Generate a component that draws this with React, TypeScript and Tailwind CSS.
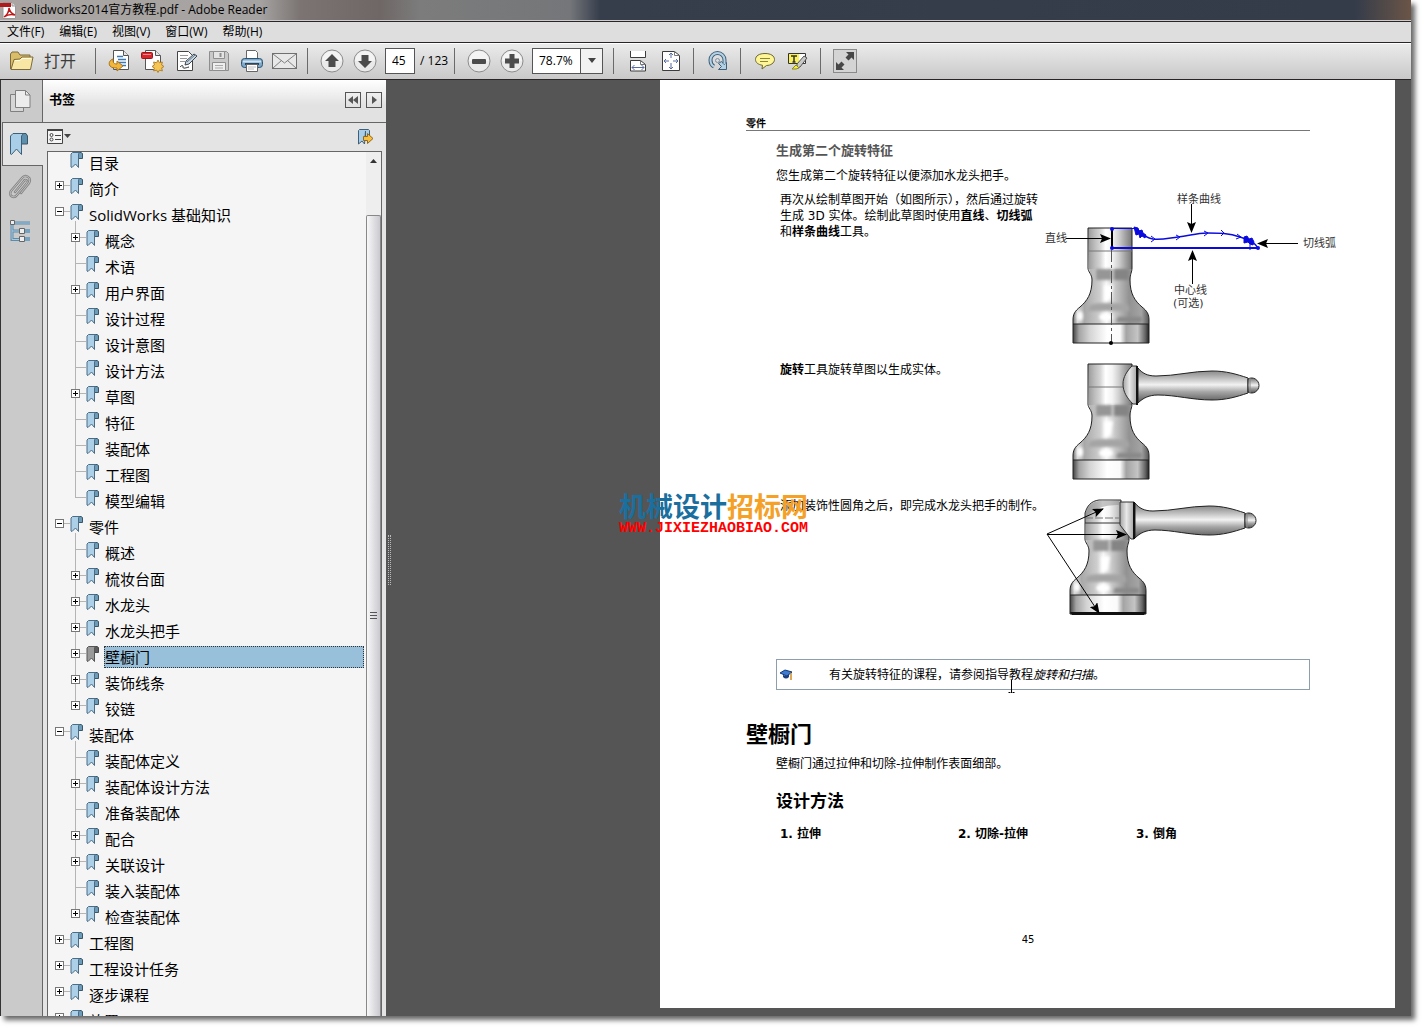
import React from 'react';

type Bookmark = {
  label: string;
  level: 1 | 2;
  state?: 'open' | 'closed';
  selected?: boolean;
  last?: boolean;
};

const bookmarks: Bookmark[] = [
  { label: '目录', level: 1 },
  { label: '简介', level: 1, state: 'closed' },
  { label: 'SolidWorks 基础知识', level: 1, state: 'open' },
  { label: '概念', level: 2, state: 'closed' },
  { label: '术语', level: 2 },
  { label: '用户界面', level: 2, state: 'closed' },
  { label: '设计过程', level: 2 },
  { label: '设计意图', level: 2 },
  { label: '设计方法', level: 2 },
  { label: '草图', level: 2, state: 'closed' },
  { label: '特征', level: 2 },
  { label: '装配体', level: 2 },
  { label: '工程图', level: 2 },
  { label: '模型编辑', level: 2, last: true },
  { label: '零件', level: 1, state: 'open' },
  { label: '概述', level: 2 },
  { label: '梳妆台面', level: 2, state: 'closed' },
  { label: '水龙头', level: 2, state: 'closed' },
  { label: '水龙头把手', level: 2, state: 'closed' },
  { label: '壁橱门', level: 2, state: 'closed', selected: true },
  { label: '装饰线条', level: 2, state: 'closed' },
  { label: '铰链', level: 2, state: 'closed', last: true },
  { label: '装配体', level: 1, state: 'open' },
  { label: '装配体定义', level: 2 },
  { label: '装配体设计方法', level: 2, state: 'closed' },
  { label: '准备装配体', level: 2 },
  { label: '配合', level: 2, state: 'closed' },
  { label: '关联设计', level: 2, state: 'closed' },
  { label: '装入装配体', level: 2 },
  { label: '检查装配体', level: 2, state: 'closed', last: true },
  { label: '工程图', level: 1, state: 'closed' },
  { label: '工程设计任务', level: 1, state: 'closed' },
  { label: '逐步课程', level: 1, state: 'closed' },
  { label: '放置', level: 1, state: 'closed' },
];

const menus = ['文件(F)', '编辑(E)', '视图(V)', '窗口(W)', '帮助(H)'];

/* ---------- icons ---------- */

const PdfIcon = () => (
  <svg width="16" height="17" viewBox="0 0 16 17">
    <path d="M3 .5h9l3.500 3.500v12.500H3z" fill="#fff" stroke="#999" />
    <path d="M12 .5v3.500h3.500" fill="#ddd" stroke="#999" />
    <path d="M0 1h11v4H0z" fill="#b01a1a" />
    <path d="M4 15c3-2 5-6 5-9 1 4 3 6 6 7-4-1-8 0-11 2z" fill="none" stroke="#c01818" strokeWidth="1.500" />
  </svg>
);

const FolderIcon = () => (
  <svg width="25" height="20" viewBox="0 0 25 20">
    <path d="M1.500 18V3l1.500-2h6l2 3h10v4" fill="#d9bd68" stroke="#7c6a3a" />
    <path d="M2 18.500 5 8.500l6-.5 2-2h11l-2.500 12.500z" fill="#f8e6a4" stroke="#7c6a3a" strokeLinejoin="round" />
    <path d="M6 9.500h5l2-2h9" stroke="#fffbe4" fill="none" />
  </svg>
);

const SheetPath = () => (
  <>
    <path d="M5.500 1.500h10l5 5v14h-15z" fill="#fff" stroke="#555" />
    <path d="M15.500 1.500v5h5" fill="#e6e6e6" stroke="#555" />
  </>
);

const ExportIcon = () => (
  <svg width="24" height="24" viewBox="0 0 24 24">
    <SheetPath />
    <path d="M9 7.500h6M10 10.500h8M10 13.500h8M12 16.500h6" stroke="#3b78b8" strokeWidth="1.500" />
    <path d="M5 10c-3 1-5 4-3 7 2 2 4 2 7 2v3l6-5-6-5v3c-3 0-4-1-4-5z" fill="#f3b63c" stroke="#a8741a" strokeLinejoin="round" />
  </svg>
);

const CreatePdfIcon = () => (
  <svg width="24" height="24" viewBox="0 0 24 24">
    <g transform="translate(-1 0)"><SheetPath /></g>
    <rect x="0.500" y="3.500" width="11" height="6" rx="1" fill="#d8262c" stroke="#98151a" />
    <path d="M2 5.500h8" stroke="#f08a8c" />
    <path d="m17 11 1.400 2.800 3-.8-.8 3L23 17.500l-2.400 1.400.8 3-3-.8L17 23.500l-1.400-2.400-3 .8.800-3-2.400-1.400 2.400-1.500-.8-3 3 .8z" fill="#f6c655" stroke="#b4812a" />
  </svg>
);

const SignIcon = () => (
  <svg width="24" height="24" viewBox="0 0 24 24">
    <path d="M3.500 2.500h11l4 4v15h-15z" fill="#fff" stroke="#444" />
    <path d="M6 6.500h8M6 9.500h7M6 12.500h5" stroke="#999" />
    <path d="M6 18c2-2 3-2 3 0s2 1 6 0" fill="none" stroke="#222" />
    <path d="m11 16 1-4 8-7 3 2-8 8z" fill="#c8d6e2" stroke="#3a4550" strokeLinejoin="round" />
    <path d="m13 13 8-7" stroke="#5f7485" />
  </svg>
);

const SaveIcon = () => (
  <svg width="22" height="22" viewBox="0 0 22 22">
    <path d="M1.500 1.500h17l2 2v17h-19z" fill="#c9c9c9" stroke="#8e8e8e" />
    <path d="M5.500 1.500h11v7h-11z" fill="#e4e4e4" stroke="#8e8e8e" />
    <path d="M12.500 3v4" stroke="#8e8e8e" strokeWidth="2" />
    <path d="M4.500 12.500h13v8h-13z" fill="#eee" stroke="#8e8e8e" />
    <path d="M7 15.500h8M7 18h8" stroke="#aaa" />
  </svg>
);

const PrintIcon = () => (
  <svg width="24" height="24" viewBox="0 0 24 24">
    <path d="M6.500 1.500h9l2 2v8h-11z" fill="#fff" stroke="#666" />
    <rect x="1.500" y="9.500" width="21" height="9" rx="3" fill="#7fa8c8" stroke="#2d5573" />
    <path d="M3 12.500h18" stroke="#cfe3f2" strokeWidth="2" />
    <path d="M5 15h14" stroke="#28455c" strokeWidth="2" />
    <path d="M6.500 15.500h11v7h-11z" fill="#fff" stroke="#666" />
    <path d="M8 18h8M8 20h6" stroke="#bbb" />
  </svg>
);

const MailIcon = () => (
  <svg width="25" height="18" viewBox="0 0 25 18">
    <rect x="0.500" y="1.500" width="24" height="15" fill="#e8e8e8" stroke="#707070" />
    <path d="m1 2 11.500 9L24 2M1 16l8.500-7.500M24 16l-8.500-7.500" fill="none" stroke="#808080" />
  </svg>
);

const Round = ({ children }: { children: React.ReactNode }) => (
  <svg width="24" height="24" viewBox="0 0 24 24">
    <circle cx="12" cy="12" r="11" fill="#eaeaea" stroke="#8c8c8c" />
    <path d="M2 12a10 10 0 0 1 20 0z" fill="#f4f4f4" />
    <g fill="#4c4c4c">{children}</g>
  </svg>
);

const FitWidthIcon = () => (
  <svg width="20" height="22" viewBox="0 0 20 22">
    <path d="M2.500 1v6.500h15V1" fill="#fff" stroke="#3c3c3c" />
    <path d="M2.500 21V10.500h10l5 4V21z" fill="#fff" stroke="#3c3c3c" />
    <path d="M12.500 10.500v4h5" fill="none" stroke="#777" />
    <path d="M4 17.500h12M6.500 15 4 17.500 6.500 20M13.500 15l2.500 2.500-2.500 2.500" fill="none" stroke="#5a6da0" />
  </svg>
);

const FitPageIcon = () => (
  <svg width="20" height="22" viewBox="0 0 20 22">
    <path d="M1.500 1.500h12l5 4v15h-17z" fill="#fff" stroke="#3c3c3c" />
    <path d="M13.500 1.500v4h5" fill="none" stroke="#777" />
    <path d="M10 3v5M10 13v6M3 11h5M12 11h5" stroke="#5a6da0" />
    <path d="M8 5l2-2 2 2M8 17l2 2 2-2M5 9l-2 2 2 2M15 9l2 2-2 2" fill="none" stroke="#5a6da0" />
  </svg>
);

const RotateIcon = () => (
  <svg width="20" height="22" viewBox="0 0 20 22">
    <path d="M6 16.500C3 15 2.500 12 2.500 10a7 7 0 0 1 14 0v4" fill="none" stroke="#3f5f78" strokeWidth="4" />
    <path d="M18.500 12.500v7h-8l3-3-3-3 3-2 2.500 3z" fill="#b4d2e6" stroke="#3f5f78" strokeLinejoin="round" />
    <path d="M6 16.500C3 15 2.500 12 2.500 10a7 7 0 0 1 14 0v4" fill="none" stroke="#b4d2e6" strokeWidth="2" />
    <circle cx="9.500" cy="10.500" r="2" fill="none" stroke="#7d93a3" />
  </svg>
);

const CommentIcon = () => (
  <svg width="22" height="20" viewBox="0 0 22 20">
    <path d="M11 2.500c6 0 9.500 2.500 9.500 6s-4 6-8 6L8 18l.500-3.700C4 13.500 1.500 11.500 1.500 8.500c0-3.500 3.500-6 9.500-6z" fill="#fdf596" stroke="#6b6630" />
    <path d="M6 7.500h10M6 10.500h8" stroke="#8a853c" />
  </svg>
);

const HighlightIcon = () => (
  <svg width="22" height="20" viewBox="0 0 22 20">
    <path d="M1.500 2.500h17v10h-17z" fill="#fff" stroke="#333" />
    <path d="M2 3h10v9H2z" fill="#faf15a" />
    <path d="M4 5h6M7 5v6M5.500 11h3" stroke="#333" strokeWidth="1.500" />
    <path d="m10 13 7-8 3 2-7 9-3 1z" fill="#c9c9c9" stroke="#555" strokeLinejoin="round" />
    <path d="m5 18 4-4 3 3-3 1z" fill="#f6ee30" stroke="#8b8722" />
  </svg>
);

const ExpandIcon = () => (
  <svg width="24" height="24" viewBox="0 0 24 24">
    <rect x="0.500" y="0.500" width="23" height="23" fill="#d4d4d4" stroke="#8a8a8a" />
    <path d="M21 3v8l-2.500-2.500-3 3-3-3 3-3L13 3zM3 21v-8l2.500 2.500 3-3 3 3-3 3L11 21z" fill="#474747" />
  </svg>
);

const BookmarkIcon = ({ gray = false }: { gray?: boolean }) => (
  <svg width="13" height="17" viewBox="0 0 13 17" className="shrink-0">
    <path d="M7.500 1.500 9 .5h2l1.500 1v5h-5z" fill={gray ? '#5e5e5e' : '#6d9cb8'} stroke={gray ? '#484848' : '#38576b'} />
    <path d="M2.500.5h7L8.500 2v13.500L5.500 12l-3.500 3.500-1-.5V2z" fill={gray ? '#9a9a9a' : '#abd0e8'} stroke={gray ? '#555' : '#4a6c84'} strokeLinejoin="round" />
  </svg>
);

const PagesIcon = () => (
  <svg width="22" height="24" viewBox="0 0 22 24">
    <path d="M1.500 5.500h13v17h-13z" fill="#d6d6d6" stroke="#808080" />
    <path d="M6.500 1.500h10l4.500 4.500v12.500H6.500z" fill="#ececec" stroke="#808080" />
    <path d="M16.500 1.500V6H21" fill="none" stroke="#808080" />
  </svg>
);

const BigBookmarkIcon = () => (
  <svg width="20" height="25" viewBox="0 0 20 25">
    <path d="M11.500 4 14 1.500h3L18.500 4v8h-7z" fill="#5d90ac" stroke="#38576b" />
    <path d="M4 1.500h10.500L12.500 4v18.500L7.500 17l-5 5.500-1-.5V4z" fill="#a9cfe8" stroke="#3d6078" strokeLinejoin="round" />
  </svg>
);

const ClipIcon = () => (
  <svg width="24" height="26" viewBox="0 0 24 26">
    <path
      d="m7 18 9-11c1-2 4-1 3 2L9 21c-3 4-9 1-6-4L14 4c3-4 10-1 7 5l-8 10"
      fill="none" stroke="#858585" strokeWidth="2.500" strokeLinecap="round"
    />
    <path d="m7 18 9-11c1-2 4-1 3 2L9 21c-3 4-9 1-6-4L14 4c3-4 10-1 7 5l-8 10" fill="none" stroke="#c0c0c0" strokeLinecap="round" />
  </svg>
);

const TreeIcon = () => (
  <svg width="22" height="22" viewBox="0 0 22 22">
    <path d="M3 3h18M3 3v16.500h9M3 11h9" fill="none" stroke="#5f8bab" strokeWidth="3" />
    <path d="M3 3h18M3 3v16.500h9M3 11h9" fill="none" stroke="#a9cbe2" />
    <path d="M14 11h7M14 19h7" stroke="#74a2c2" strokeWidth="4" />
    <path d="M1.500.5h4v4h-4zM10.500 8.500h5v5h-5zM10.500 16.500h5v5h-5z" fill="#eee" stroke="#666" />
  </svg>
);

/* ---------- toolbar ---------- */

const ToolButton = ({ label, children }: { label: string; children: React.ReactNode }) => (
  <button aria-label={label} className="flex h-8 w-[33px] shrink-0 items-center justify-center">
    {children}
  </button>
);

const Separator = () => <span className="mr-[7px] ml-1.5 h-[26px] w-px shrink-0 bg-[#6a6a6a]" />;

const Toolbar = () => (
  <div className="flex h-[37px] shrink-0 items-center border-y border-t-white border-b-[#2a2628] bg-linear-to-b from-[#ebebeb] to-[#c9c9c9] pb-0.5 pl-[9px] text-[12px]">
    <button className="mr-1.5 flex h-8 w-[74px] shrink-0 items-center gap-[10px] text-[16px] text-[#3c3c3c]">
      <FolderIcon />
      打开
    </button>
    <Separator />
    <ToolButton label="导出"><ExportIcon /></ToolButton>
    <ToolButton label="创建 PDF"><CreatePdfIcon /></ToolButton>
    <ToolButton label="签名"><SignIcon /></ToolButton>
    <ToolButton label="保存"><SaveIcon /></ToolButton>
    <ToolButton label="打印"><PrintIcon /></ToolButton>
    <ToolButton label="邮件"><MailIcon /></ToolButton>
    <Separator />
    <ToolButton label="上一页">
      <Round><path d="m12 5 7 7h-3.500v6h-7v-6H5z" /></Round>
    </ToolButton>
    <ToolButton label="下一页">
      <Round><path d="m12 19 7-7h-3.500V6h-7v6H5z" /></Round>
    </ToolButton>
    <input aria-label="页码" defaultValue="45" className="ml-1 h-[26px] w-[30px] border border-[#555] bg-white pl-1.5" />
    <span className="ml-[5px] w-7 shrink-0 whitespace-nowrap">/ 123</span>
    <Separator />
    <ToolButton label="缩小">
      <Round><rect x="5" y="10" width="14" height="5" rx="1" /></Round>
    </ToolButton>
    <ToolButton label="放大">
      <Round><path d="M9.500 5h5v4.500H19v5h-4.500V19h-5v-4.500H5v-5h4.500z" /></Round>
    </ToolButton>
    <div className="relative mr-1 ml-1 flex h-[26px] w-[71px] shrink-0 border border-[#555] bg-white">
      <select aria-label="缩放" className="w-full appearance-none pl-1.5">
        <option>78.7%</option>
      </select>
      <span className="pointer-events-none absolute inset-y-0 right-0 flex w-[22px] items-center justify-center border-l border-[#555] bg-[#f2f2f2]">
        <svg width="8" height="5" viewBox="0 0 8 5"><path d="M0 0h8L4 5z" fill="#444" /></svg>
      </span>
    </div>
    <Separator />
    <ToolButton label="适合宽度"><FitWidthIcon /></ToolButton>
    <ToolButton label="适合页面"><FitPageIcon /></ToolButton>
    <Separator />
    <ToolButton label="旋转"><RotateIcon /></ToolButton>
    <Separator />
    <ToolButton label="附注"><CommentIcon /></ToolButton>
    <ToolButton label="高亮"><HighlightIcon /></ToolButton>
    <Separator />
    <ToolButton label="阅读模式"><ExpandIcon /></ToolButton>
  </div>
);

/* ---------- sidebar ---------- */

const NavRail = () => (
  <nav className="flex w-[42px] shrink-0 flex-col bg-[#cacaca]">
    <button aria-label="页面" className="flex h-[42px] items-center justify-center border-r border-[#666] pr-1">
      <PagesIcon />
    </button>
    <button aria-label="书签" className="ml-px flex h-11 items-center border border-r-0 border-[#666] bg-[#e4e4e4] pl-[6px]">
      <BigBookmarkIcon />
    </button>
    <div className="flex flex-1 flex-col items-center gap-5 border-r border-[#666] pt-2 pr-1">
      <button aria-label="附件"><ClipIcon /></button>
      <button aria-label="模型树"><TreeIcon /></button>
    </div>
  </nav>
);

const Expander = ({ open }: { open: boolean }) => (
  <svg width="9" height="9" viewBox="0 0 9 9">
    <rect x="0.500" y="0.500" width="8" height="8" fill="#fff" stroke="#777" />
    <path d={open ? 'M2 4.500h5' : 'M2 4.500h5M4.500 2v5'} stroke="#000" />
  </svg>
);

const Row = ({ item }: { item: Bookmark }) => (
  <li className="flex h-[26px] items-start">
    {item.level === 2 && (
      <span className="flex w-7 shrink-0 justify-end">
        <span className={item.last ? 'h-2 w-px bg-[#b4b4b4]' : 'h-[26px] w-px bg-[#b4b4b4]'} />
      </span>
    )}
    {/* the expander of a child row sits on the trunk line */}
    <span className={item.level === 2 ? '-ml-[5px] flex h-[15px] w-[15px] shrink-0 items-center' : 'ml-[7px] flex h-[15px] w-[15px] shrink-0 items-center'}>
      {item.state ? (
        <button aria-label={item.label} className="shrink-0"><Expander open={item.state === 'open'} /></button>
      ) : (
        <span className="w-[5px] shrink-0" />
      )}
      {(item.state || item.level === 2) && <span className="h-px flex-1 bg-[#b4b4b4]" />}
    </span>
    <span className="flex h-[26px] w-[13px] shrink-0 flex-col">
      <BookmarkIcon gray={item.selected} />
      {item.state === 'open' && <span className="ml-[5px] w-px flex-1 bg-[#b4b4b4]" />}
    </span>
    <a
      href="#"
      className={
        item.selected
          ? 'ml-[5px] h-[22px] flex-1 border border-dotted border-[#333] bg-[#99c0da] leading-5 whitespace-nowrap'
          : 'ml-1.5 h-[22px] leading-[22px] whitespace-nowrap'
      }
    >
      {item.label}
    </a>
  </li>
);

const BookmarkPanel = () => (
  <aside className="flex w-[343px] shrink-0 flex-col bg-[#e4e4e4]">
    <header className="flex h-[43px] shrink-0 items-center border-b border-[#666] bg-linear-to-b from-white to-[#e2e2e2] to-60% pr-1 pb-0.5 pl-1.5">
      <h2 className="flex-1 text-[13px] font-bold">书签</h2>
      <button aria-label="折叠" className="mr-[5px] flex h-4 w-4 items-center justify-center border border-[#555]">
        <svg width="10" height="8" viewBox="0 0 10 8"><path d="M5 0v8L0 4zM10 0v8L5 4z" fill="#555" /></svg>
      </button>
      <button aria-label="展开" className="flex h-4 w-4 items-center justify-center border border-[#555]">
        <svg width="5" height="8" viewBox="0 0 5 8"><path d="M0 0v8l5-4z" fill="#555" /></svg>
      </button>
    </header>
    <div className="flex h-7 shrink-0 items-center justify-between pr-3 pb-0.5 pl-1">
      <button aria-label="选项">
        <svg width="24" height="15" viewBox="0 0 24 15">
          <path d="M.5.5h15v14H.5z" fill="#f4f4f4" stroke="#444" />
          <path d="M0 1h16" stroke="#444" strokeWidth="2" />
          <circle cx="4.500" cy="6" r="1.500" fill="none" stroke="#444" />
          <circle cx="4.500" cy="10.500" r="1.500" fill="none" stroke="#444" />
          <path d="M8 6.500h6M8 10.500h6" stroke="#444" />
          <path d="M17 5h7l-3.500 4z" fill="#444" />
        </svg>
      </button>
      <button aria-label="查找当前书签">
        <svg width="17" height="17" viewBox="0 0 17 17">
          <path d="M2.500 1.500h9l1 1V9h-4v-6L7.500 16 5 13l-3.500 3V2.500z" fill="#a9cfe8" stroke="#3d6078" strokeLinejoin="round" />
          <path d="M6.500 8.500h4v-3l5.500 5-5.500 5v-3h-4z" fill="#f7bf3e" stroke="#93661a" strokeLinejoin="round" />
        </svg>
      </button>
    </div>
    <div className="mr-1 ml-1 flex min-h-0 flex-1 border border-b-0 border-[#666] bg-[#f5f5f5]">
      <ul className="min-w-0 flex-1 overflow-hidden pr-0.5 text-[15px]">
        {bookmarks.map((item, i) => <Row key={i} item={item} />)}
      </ul>
      <div className="flex w-[15px] shrink-0 flex-col bg-[#eee]">
        <button aria-label="向上滚动" className="flex h-[63px] justify-center pt-[7px]">
          <svg width="7" height="4" viewBox="0 0 7 4"><path d="M0 4h7L3.500 0z" fill="#333" /></svg>
        </button>
        <div className="flex flex-1 items-center justify-center rounded-t-xs border border-b-0 border-[#888] bg-linear-to-r from-[#f8f8f8] to-[#c9c9d0]">
          <svg width="7" height="8" viewBox="0 0 7 8"><path d="M0 .5h7M0 3.500h7M0 6.500h7" stroke="#555" /></svg>
        </div>
      </div>
    </div>
  </aside>
);

/* ---------- figures ---------- */

const Defs = () => (
  <defs>
    <linearGradient id="metal" gradientUnits="userSpaceOnUse" x1="29" y1="0" x2="105" y2="0">
      <stop offset="0" stopColor="#777" />
      <stop offset="0.060" stopColor="#d8d8d8" />
      <stop offset="0.150" stopColor="#a8a8a8" />
      <stop offset="0.350" stopColor="#cdcdcd" />
      <stop offset="0.440" stopColor="#f6f6f6" />
      <stop offset="0.560" stopColor="#c6c6c6" />
      <stop offset="0.740" stopColor="#929292" />
      <stop offset="0.900" stopColor="#a4a4a4" />
      <stop offset="1" stopColor="#555" />
    </linearGradient>
    <linearGradient id="neck" gradientUnits="userSpaceOnUse" x1="44" y1="0" x2="88" y2="0">
      <stop offset="0" stopColor="#999" />
      <stop offset="0.150" stopColor="#bcbcbc" />
      <stop offset="0.280" stopColor="#d6d6d6" />
      <stop offset="0.400" stopColor="#fff" />
      <stop offset="0.550" stopColor="#f4f4f4" />
      <stop offset="0.700" stopColor="#d0d0d0" />
      <stop offset="0.850" stopColor="#a2a2a2" />
      <stop offset="1" stopColor="#777" />
    </linearGradient>
    <linearGradient id="collar" gradientUnits="userSpaceOnUse" x1="78" y1="0" x2="93" y2="0">
      <stop offset="0" stopColor="#9a9a9a" />
      <stop offset="0.500" stopColor="#e8e8e8" />
      <stop offset="1" stopColor="#a6a6a6" />
    </linearGradient>
    <linearGradient id="base" gradientUnits="userSpaceOnUse" x1="29" y1="0" x2="105" y2="0">
      <stop offset="0" stopColor="#444" />
      <stop offset="0.080" stopColor="#a4a4a4" />
      <stop offset="0.220" stopColor="#d4d4d4" />
      <stop offset="0.450" stopColor="#fff" />
      <stop offset="0.620" stopColor="#fafafa" />
      <stop offset="0.700" stopColor="#a4a4a4" />
      <stop offset="0.850" stopColor="#c4c4c4" />
      <stop offset="0.950" stopColor="#666" />
      <stop offset="1" stopColor="#222" />
    </linearGradient>
    <linearGradient id="grip" x1="0" y1="0" x2="0" y2="1">
      <stop offset="0" stopColor="#777" />
      <stop offset="0.200" stopColor="#a6a6a6" />
      <stop offset="0.480" stopColor="#f2f2f2" />
      <stop offset="0.680" stopColor="#a6a6a6" />
      <stop offset="1" stopColor="#555" />
    </linearGradient>
    <filter id="soft" x="-50%" y="-50%" width="200%" height="200%">
      <feGaussianBlur stdDeviation="1.500" />
    </filter>
    <marker id="arrow" markerUnits="userSpaceOnUse" markerWidth="11" markerHeight="9" refX="10" refY="4.500" orient="auto">
      <path d="M0 0 11 4.500 0 9l2-4.500z" fill="#000" />
    </marker>
  </defs>
);

const Body = () => (
  <g>
    <path
      d="M45 38v4c0 4 3 6 3 12 0 14-5 21-12 27-5 4-7 7-7 13v4h76v-4c0-6-2-9-7-13-7-6-12-13-12-27 0-6 2-8 2-12v-4z"
      fill="url(#metal)"
    />
    <path d="M44 2h44v41H45z" fill="url(#neck)" />
    <g filter="url(#soft)">
      <path d="M52 43h16v11H52z" fill="#969696" />
      <path d="M70 43h15v11H70z" fill="#848484" />
      <path d="M60 59h9l-2 14-7 3z" fill="#fff" />
      <path d="M46 79c10-3 24-3 38 0l2 6H44z" fill="#a4a4a4" />
      <ellipse cx="36" cy="90" rx="3" ry="5" fill="#fff" />
      <ellipse cx="62" cy="91" rx="7" ry="4" fill="#fff" />
      <path d="M74 91h24v5H72z" fill="#888" />
    </g>
    <path d="M29 98h76v19H29z" fill="url(#base)" />
    <path
      d="M44 2v40c0 4 4 6 4 12 0 14-5 21-12 27-5 4-7 7-7 13v23h76V94c0-6-2-9-7-13-7-6-12-13-12-27 0-6 2-8 2-12V2zM29 98h76"
      fill="none" stroke="#222"
    />
    <path d="M44 25h44" stroke="#777" />
  </g>
);

const Handle = () => (
  <g stroke="#222">
    <path d="M94 6c4 5 9 8 18 8 20 0 36-5 56-5 14 0 24 3 36 7v15c-12 4-22 7-36 7-20 0-36-5-54-5-9 0-15 3-20 8z" fill="url(#grip)" />
    <path d="M204 17c5-3 11 1 11 6.500S209 33 204 30z" fill="url(#grip)" />
    <path d="M206 16v15" stroke="#888" />
  </g>
);

const SketchFigure = () => (
  <svg width="296" height="160" viewBox="0 0 296 160" className="shrink-0">
    <Defs />
    <g transform="translate(0 34)"><Body /></g>
    <path d="M67.500 37v114" stroke="#555" strokeDasharray="12 3 3 3" />
    <path d="M68 38v18" stroke="#000" strokeWidth="2" />
    <circle cx="67" cy="151" r="2" />
    <g fill="none" stroke="#0a0adf">
      <path d="M68 36.500h24" />
      <path d="M68 56h146" strokeWidth="2" />
      <path d="M93 37c4 3 5 8 16 10 9 1 16-1 25-2 11-1 18-4 29-4 12 0 22 0 33 4 8 3 14 4 18 11" strokeWidth="1.500" />
      <path d="M107 44l4 3-4 3M132 43l4 2-4 3M160 39l4 2-4 3M177 38l3 3-3 3M193 42l4 3-5 2M206 52v6" />
    </g>
    <path d="m90 35 4 1 1 3 3-1 1 3 3 2-1 3-3-2-2 2-1-4-3 1zM200 45l3-1 2 3 3-1 2 4-1 3-3-1-2-2-4 1z" fill="#0a0adf" stroke="#0a0adf" />
    <circle cx="68" cy="37" r="2" fill="#0a0adf" />
    <circle cx="68" cy="56" r="2" fill="#0a0adf" />
    <circle cx="214" cy="56" r="2" fill="#0a0adf" />
    <g stroke="#000">
      <path d="M22 46.500h44" markerEnd="url(#arrow)" />
      <path d="M147.500 12v28" markerEnd="url(#arrow)" />
      <path d="M148.500 92V59" markerEnd="url(#arrow)" />
      <path d="M254 51.500h-40" markerEnd="url(#arrow)" />
    </g>
    <g fill="#333" className="text-[11px]">
      <text x="1" y="50">直线</text>
      <text x="133" y="11">样条曲线</text>
      <text x="130" y="102">中心线</text>
      <text x="129" y="115">(可选)</text>
      <text x="259" y="55">切线弧</text>
    </g>
  </svg>
);

const SolidFigure = () => (
  <svg width="296" height="120" viewBox="0 0 296 120" className="shrink-0">
    <Body />
    <Handle />
    <path d="M88 4h5v38h-4C83 36 79 30 79 22c0-7 4-13 9-18z" fill="url(#collar)" stroke="#333" />
    <path d="M93 4v39" stroke="#111" strokeWidth="2" />
  </svg>
);

const FilletFigure = () => (
  <svg width="296" height="120" viewBox="0 0 296 120" className="shrink-0">
    <g transform="translate(-3 -1)">
      <Body />
      <path d="M40 0h60v26H40z" fill="#fff" />
      <path d="M44 26V16C46 9 50 4 58 3h22v23z" fill="url(#neck)" stroke="#333" />
      <path d="M45 16c2-6 6-11 13-12h20v4c-10 0-22 1-33 12z" fill="#8c8c8c" opacity="0.500" />
      <Handle />
      <path d="M79 5h14v37h-3L79 28z" fill="url(#collar)" stroke="#333" />
      <path d="M93 5v37" stroke="#111" strokeWidth="2" />
      <path d="M44 21h34" stroke="#777" strokeDasharray="8 2" />
      <path d="M29 115h76l-2 3H31z" fill="#111" />
    </g>
    <g stroke="#000">
      <path d="M3 36 59 11" markerEnd="url(#arrow)" />
      <path d="M3 36.500h79" markerEnd="url(#arrow)" />
      <path d="m3 36 52 79" markerEnd="url(#arrow)" />
    </g>
  </svg>
);

/* ---------- document ---------- */

const DocumentPage = () => (
  <article className="h-[928px] w-[735px] shrink-0 bg-white pt-[38px] pr-[85px] pl-[86px] font-['DejaVu_Sans','Noto_Sans_CJK_SC',sans-serif] text-[12px] leading-4 whitespace-nowrap text-black">
    <div className="border-b border-[#777] text-[10px] leading-3 font-bold">零件</div>
    <div className="pl-[30px]">
      <h3 className="mt-[10px] text-[13px] leading-5 font-bold text-[#555]">生成第二个旋转特征</h3>
      <p className="mt-[7px]">您生成第二个旋转特征以便添加水龙头把手。</p>
      <div className="mt-2 flex h-[170px] pl-1">
        <p className="w-[264px] shrink-0">
          再次从绘制草图开始（如图所示），然后通过旋转
          <br />
          生成 3D 实体。绘制此草图时使用<b>直线</b>、<b>切线弧</b>
          <br />
          和<b>样条曲线</b>工具。
        </p>
        <SketchFigure />
      </div>
      <div className="flex h-[136px] pl-1">
        <p className="w-[264px] shrink-0"><b>旋转</b>工具旋转草图以生成实体。</p>
        <SolidFigure />
      </div>
      <div className="flex h-[161px] pl-1">
        <p className="w-[264px] shrink-0">添加装饰性圆角之后，即完成水龙头把手的制作。</p>
        <FilletFigure />
      </div>
      <div className="relative flex h-[31px] items-center border border-[#8d9fac] pl-[3px]">
        <svg width="13" height="12" viewBox="0 0 13 12">
          <path d="m0 4 5-3 7 2-5 4z" fill="#3f7bd0" stroke="#123a7c" />
          <path d="M3 6v2c2 2 4 2 6 0V5L7 7z" fill="#1c3f80" />
          <path d="M11 4v7" stroke="#d08c1e" strokeWidth="1.500" />
        </svg>
        <p className="ml-9">有关旋转特征的课程，请参阅指导教程<i>旋转和扫描</i>。</p>
        {/* text cursor */}
        <svg width="7" height="14" viewBox="0 0 7 14" className="absolute top-5 left-[231px]">
          <path d="M3.500 0v13M.5 12.500h2M4.500 12.500h2" stroke="#000" />
        </svg>
      </div>
    </div>
    <h1 className="mt-[29px] text-[22px] leading-8 font-bold">壁橱门</h1>
    <div className="pl-[30px]">
      <p className="mt-[5px]">壁橱门通过拉伸和切除-拉伸制作表面细部。</p>
      <h2 className="mt-[17px] text-[17px] leading-6 font-bold">设计方法</h2>
      <div className="mt-[13px] -mr-1 grid grid-cols-3 pl-1 font-bold">
        <span>1. 拉伸</span>
        <span>2. 切除-拉伸</span>
        <span>3. 倒角</span>
      </div>
    </div>
    <footer className="mt-[90px] text-center text-[10px]">45</footer>
  </article>
);

const Watermark = () => (
  <div className="pointer-events-none absolute top-[413px] left-[233px] whitespace-nowrap">
    <p className="text-[27px] leading-7 font-bold text-[#1b6f9e]">
      机械设计<span className="text-[#f5a027]">招标网</span>
    </p>
    <p className="font-['Liberation_Mono',monospace] text-[15px] leading-4 font-bold text-[#f00]">WWW.JIXIEZHAOBIAO.COM</p>
  </div>
);

export default function App() {
  return (
    <div className="h-screen overflow-hidden bg-white pr-[15px] pb-[15px] font-['Open_Sans','Noto_Sans_CJK_SC',sans-serif] text-black">
      <div className="flex h-full flex-col bg-[#555] shadow-[4px_4px_5px_#0009]">
        <div className="flex h-[21px] shrink-0 items-center gap-[5px] border-b border-[#ccc] bg-[linear-gradient(90deg,#aaa5a2_0,#a5a3a2_260px,#7b7472_300px,#6e6765_380px,#7c7c7c_420px,#747679_570px,#363e4c_600px,#343c4a_96%,#6b5547_100%)] text-[12px]">
          <PdfIcon />
          <span className="whitespace-nowrap">solidworks2014官方教程.pdf - Adobe Reader</span>
        </div>
        <div className="flex h-[22px] shrink-0 items-center gap-[15px] border-y border-[#2a2628] bg-[#dedede] pl-[7px] text-[12px]">
          {menus.map((m) => <button key={m}>{m}</button>)}
        </div>
        <Toolbar />
        <main className="flex min-h-0 flex-1 border-l border-[#333]">
          <NavRail />
          <BookmarkPanel />
          <section className="relative flex min-w-0 flex-1 items-start justify-between overflow-hidden bg-[#555] pr-4">
            <div className="flex h-full w-[6px] shrink-0 items-center gap-px pb-6 pl-0.5">
              <span className="mt-12 h-[50px] border-l border-dotted border-[#bbb]" />
              <span className="mt-12 h-[50px] border-l border-dotted border-[#bbb]" />
            </div>
            <DocumentPage />
            <Watermark />
          </section>
        </main>
      </div>
    </div>
  );
}
